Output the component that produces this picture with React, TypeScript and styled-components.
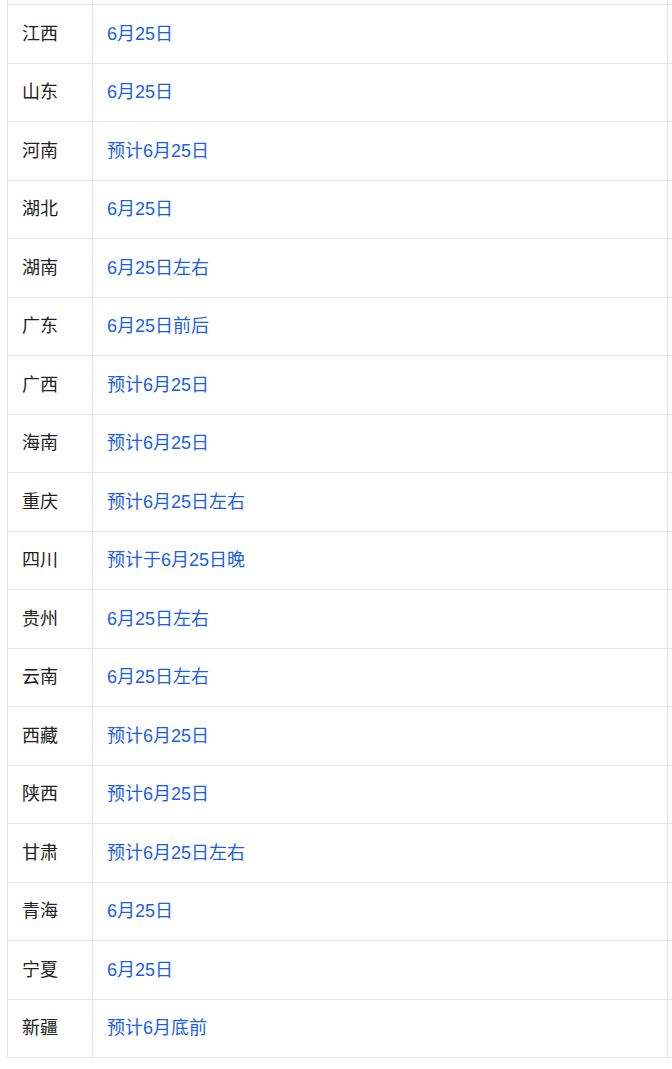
import styled, { createGlobalStyle } from 'styled-components';

const rows: [string, string][] = [
  ['江西', '6月25日'],
  ['山东', '6月25日'],
  ['河南', '预计6月25日'],
  ['湖北', '6月25日'],
  ['湖南', '6月25日左右'],
  ['广东', '6月25日前后'],
  ['广西', '预计6月25日'],
  ['海南', '预计6月25日'],
  ['重庆', '预计6月25日左右'],
  ['四川', '预计于6月25日晚'],
  ['贵州', '6月25日左右'],
  ['云南', '6月25日左右'],
  ['西藏', '预计6月25日'],
  ['陕西', '预计6月25日'],
  ['甘肃', '预计6月25日左右'],
  ['青海', '6月25日'],
  ['宁夏', '6月25日'],
  ['新疆', '预计6月底前'],
];

const GlobalStyle = createGlobalStyle`
  html, body {
    margin: 0;
    padding: 0;
    overflow: hidden;
    background: #fff;
  }
  body {
    font-family: "Liberation Sans", "Noto Sans CJK SC", sans-serif;
  }
`;

const Page = styled.div`
  padding: 0 0 0 7px;
  width: 900px;
`;

const Table = styled.table`
  border-collapse: collapse;
  table-layout: fixed;
  width: 800px;
  font-size: 18px;
  line-height: 24px;
`;

const Cell = styled.td<{ $width?: number }>`
  border: 1px solid #e5e5e5;
  padding: 0 14px;
  height: 57.5px;
  vertical-align: middle;
  white-space: nowrap;
  ${({ $width }) => ($width ? `width: ${$width}px;` : '')}
`;

const StubCell = styled.td`
  border-left: 1px solid #e5e5e5;
  border-right: 1px solid #e5e5e5;
  height: 4px;
  padding: 0;
`;

const Province = styled(Cell)`
  color: #222;
`;

const DateCell = styled(Cell)`
  color: #1d5ee6;
`;

export default function App() {
  return (
    <Page>
      <GlobalStyle />
      <Table>
        <colgroup>
          <col style={{ width: 85 }} />
          <col style={{ width: 575 }} />
          <col />
        </colgroup>
        <tbody>
          <tr>
            <StubCell />
            <StubCell />
            <StubCell />
          </tr>
          {rows.map(([name, date]) => (
            <tr key={name}>
              <Province>{name}</Province>
              <DateCell>{date}</DateCell>
              <Cell />
            </tr>
          ))}
        </tbody>
      </Table>
    </Page>
  );
}
